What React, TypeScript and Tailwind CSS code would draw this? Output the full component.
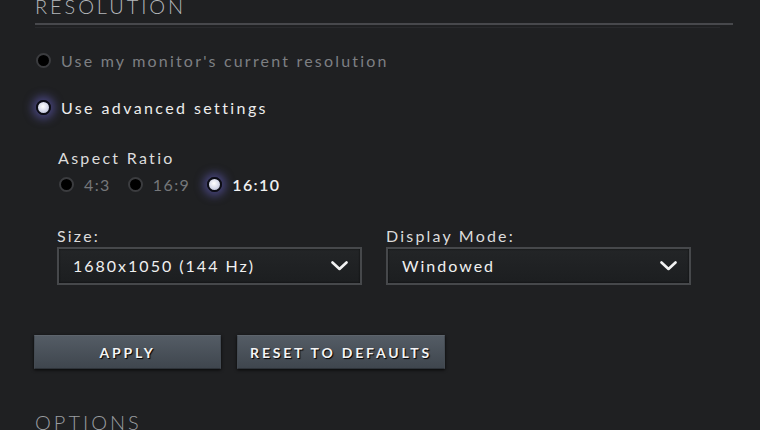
import { useState } from 'react';

type RadioProps = { on: boolean };

function Radio({ on }: RadioProps) {
  if (on) {
    return (
      <span className="inline-block w-[15px] h-[15px] rounded-full border-[2.5px] border-[#0c0c16] bg-[radial-gradient(circle_at_45%_40%,#ffffff_0%,#d6d9ea_55%,#a9adc4_100%)] shadow-[0_0_8px_4px_rgba(105,100,205,0.5)] shrink-0" />
    );
  }
  return (
    <span className="inline-block w-[15px] h-[15px] rounded-full border-2 border-[#3b3c3f] bg-black shrink-0" />
  );
}

function Chevron() {
  return (
    <svg width="17" height="10" viewBox="0 0 17 10" fill="none">
      <path d="M1.5 1.5 L8.5 8 L15.5 1.5" stroke="#f2f2f2" strokeWidth="2.6" strokeLinecap="round" strokeLinejoin="round" />
    </svg>
  );
}

function Dropdown({ label, value }: { label: string; value: string }) {
  return (
    <div className="w-[305px]">
      <div className="h-[20px] flex items-center text-[16px] tracking-[2.2px] text-[#dcdcdc]">{label}</div>
      <div className="mt-[1px] h-[38px] flex items-center justify-between pl-[14px] pr-[12px] border-2 border-[#46484b] bg-[linear-gradient(to_bottom,#232527,#1c1e20)] shadow-[inset_0_0_2px_rgba(0,0,0,0.8)]">
        <span className="text-[16px] tracking-[2px] text-[#f0f0f0]">{value}</span>
        <Chevron />
      </div>
    </div>
  );
}

function GameButton({ children, w }: { children: string; w: string }) {
  return (
    <button
      className={`${w} h-[34px] flex items-center justify-center border border-t-[#5d646c] border-x-[#444b53] border-b-[#2e3339] bg-[linear-gradient(to_bottom,#545c65,#3f464e)] shadow-[0_1px_3px_rgba(0,0,0,0.8)] text-[14px] font-bold tracking-[2.8px] text-[#f4f4f4] [text-shadow:1px_1px_1px_#000]`}
    >
      {children}
    </button>
  );
}

export default function App() {
  const [mode, setMode] = useState<'monitor' | 'advanced'>('advanced');
  const [aspect, setAspect] = useState('16:10');

  return (
    <div className="w-[760px] h-[430px] overflow-hidden bg-[#1f2022] font-['Lato',sans-serif]">
      <div className="pl-[35px] pr-[27px]">
        <div className="-mt-[5px] h-[22px] text-[20px] leading-[22px] font-light tracking-[2.9px] text-[#b4b7ba]">RESOLUTION</div>
        <div className="mt-[6px] h-[2px] bg-[#47484c]" />
        <div className="mt-[2px] h-px bg-[#28292c] mr-[13px]" />

        <div className="pl-[1px]">
          <div
            className="mt-[22px] h-[20px] flex items-center gap-[10px] cursor-pointer"
            onClick={() => setMode('monitor')}
          >
            <Radio on={mode === 'monitor'} />
            <span className="text-[16px] tracking-[2.2px] text-[#7d7f82] pt-[2px]">Use my monitor's current resolution</span>
          </div>

          <div
            className="mt-[27px] h-[20px] flex items-center gap-[10px] cursor-pointer"
            onClick={() => setMode('advanced')}
          >
            <Radio on={mode === 'advanced'} />
            <span className="text-[16px] tracking-[2.4px] text-[#ededed] pt-[2px]">Use advanced settings</span>
          </div>

          <div className="pl-[22px]">
            <div className="mt-[31px] h-[20px] flex items-center text-[16px] tracking-[2.3px] text-[#dcdcdc]">Aspect Ratio</div>
            <div className="mt-[6px] h-[20px] flex items-center gap-[17px] pl-[1px]">
              {['4:3', '16:9', '16:10'].map(a => (
                <div key={a} className="flex items-center gap-[10px] cursor-pointer" onClick={() => setAspect(a)}>
                  <Radio on={aspect === a} />
                  <span className={`text-[16px] tracking-[1.4px] pt-[2px] ${aspect === a ? 'text-[#f0f0f0] font-semibold' : 'text-[#75777a]'}`}>{a}</span>
                </div>
              ))}
            </div>

            <div className="mt-[32px] flex gap-[24px] -ml-[1px]">
              <Dropdown label="Size:" value="1680x1050 (144 Hz)" />
              <Dropdown label="Display Mode:" value="Windowed" />
            </div>
          </div>
        </div>

        <div className="mt-[50px] flex gap-[16px] -ml-[1px]">
          <GameButton w="w-[187px]">APPLY</GameButton>
          <GameButton w="w-[208px]">RESET TO DEFAULTS</GameButton>
        </div>

        <div className="mt-[42px] text-[20px] leading-[22px] font-light tracking-[3px] text-[#9a9da0]">OPTIONS</div>
      </div>
    </div>
  );
}
